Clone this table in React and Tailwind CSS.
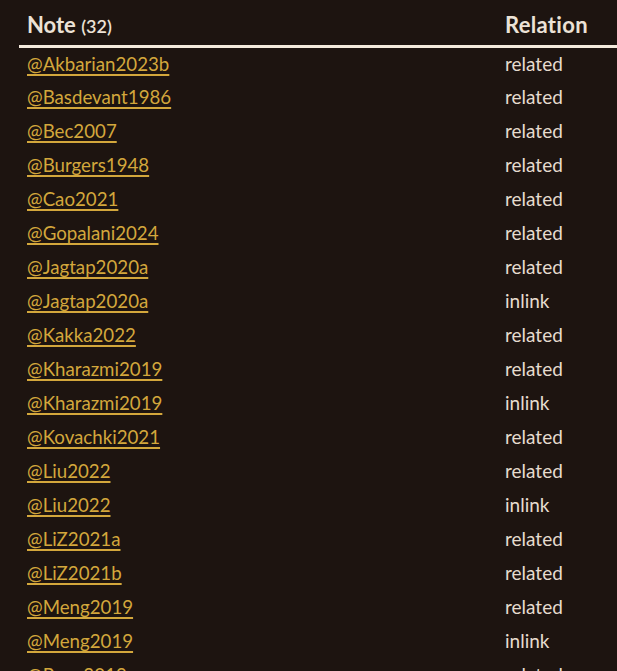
const rows = [
  ['@Akbarian2023b', 'related'],
  ['@Basdevant1986', 'related'],
  ['@Bec2007', 'related'],
  ['@Burgers1948', 'related'],
  ['@Cao2021', 'related'],
  ['@Gopalani2024', 'related'],
  ['@Jagtap2020a', 'related'],
  ['@Jagtap2020a', 'inlink'],
  ['@Kakka2022', 'related'],
  ['@Kharazmi2019', 'related'],
  ['@Kharazmi2019', 'inlink'],
  ['@Kovachki2021', 'related'],
  ['@Liu2022', 'related'],
  ['@Liu2022', 'inlink'],
  ['@LiZ2021a', 'related'],
  ['@LiZ2021b', 'related'],
  ['@Meng2019', 'related'],
  ['@Meng2019', 'inlink'],
  ['@Peng2019', 'related'],
];

export default function App() {
  return (
    <div className="min-h-screen h-[671px] overflow-hidden bg-[#1d1410] pl-[19px] font-['Lato','Noto_Sans',sans-serif]">
      <table className="w-[598px] border-collapse text-left">
        <thead>
          <tr className="border-b-[3px] border-[#f3e9dc]">
            <th className="h-[46px] pl-2 pt-1 text-[22px] font-bold text-[#ece2d6]">
              Note <span className="text-[18px] font-semibold">(32)</span>
            </th>
            <th className="w-[120px] pl-[8px] pt-1 text-[22px] font-bold tracking-[0.3px] text-[#ece2d6]">Relation</th>
          </tr>
        </thead>
        <tbody>
          {rows.map(([note, rel], i) => (
            <tr key={i} className="h-[34px]">
              <td className="pl-2 pt-px text-[18.7px]">
                <a href="#" className="text-[#d3a73c] underline decoration-2 underline-offset-[3px]">{note}</a>
              </td>
              <td className="pl-2 pt-px text-[19px] text-[#e6dccf]">{rel}</td>
            </tr>
          ))}
        </tbody>
      </table>
    </div>
  );
}
